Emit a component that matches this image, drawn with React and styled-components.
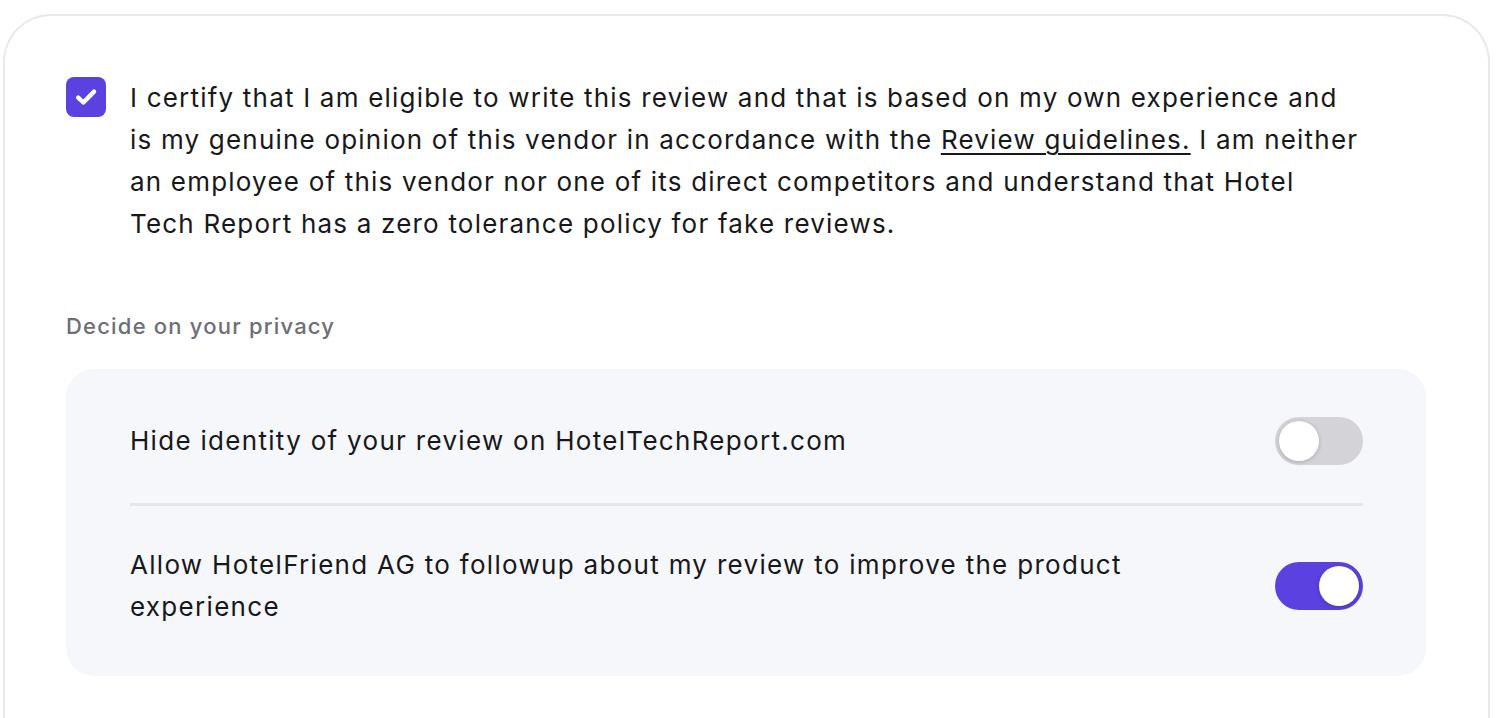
import React, { useState } from 'react';
import styled, { createGlobalStyle } from 'styled-components';

const Global = createGlobalStyle`
  html, body { margin: 0; padding: 0; background: #fff; }
  body { font-family: Inter, "Noto Sans", sans-serif; color: #18181b; overflow: hidden; }
`;

const Card = styled.div`
  margin: 14px 16px 0 3px;
  height: 760px;
  border: 2px solid #e8e8ed;
  border-bottom: none;
  border-radius: 48px 48px 0 0;
  padding: 61px 62px 0 61px;
  box-sizing: border-box;
`;

const CertifyRow = styled.label`
  display: flex;
  align-items: flex-start;
  gap: 24px;
  cursor: pointer;
`;

const Check = styled.span`
  flex: none;
  width: 40px;
  height: 40px;
  border-radius: 8px;
  background: ${p => (p.$checked ? '#5b41e0' : '#fff')};
  border: ${p => (p.$checked ? 'none' : '2px solid #d4d4d8')};
  box-sizing: border-box;
  display: flex;
  align-items: center;
  justify-content: center;
`;

const CertifyText = styled.p`
  margin: 0;
  max-width: 1233px;
  font-size: 26px;
  line-height: 42px;
  color: #18181b;
  letter-spacing: 1.2px;

  a {
    color: inherit;
    text-decoration: underline;
    text-underline-offset: 4px;
    text-decoration-thickness: 2px;
  }
`;

const SectionLabel = styled.div`
  margin-top: 67px;
  font-size: 22px;
  font-weight: 500;
  color: #6e6d78;
  line-height: 28px;
  letter-spacing: 1.2px;
`;

const PrivacyBox = styled.div`
  margin-top: 29px;
  background: #f6f7fb;
  border-radius: 28px;
  padding: 10px 63px 10px 64px;
`;

const Row = styled.div`
  display: flex;
  align-items: center;
  justify-content: space-between;
  gap: 40px;
  padding: 38px 0;
  & + & { border-top: 3px solid #e6e6eb; }
`;

const RowText = styled.div`
  font-size: 26px;
  line-height: 42px;
  color: #18181b;
  letter-spacing: 1.3px;
  max-width: 1000px;
`;

const Track = styled.button`
  flex: none;
  position: relative;
  width: 88px;
  height: 48px;
  border: none;
  border-radius: 24px;
  padding: 0;
  cursor: pointer;
  background: ${p => (p.$on ? '#5b41e0' : '#d4d4d8')};
`;

const Knob = styled.span`
  position: absolute;
  top: 4px;
  left: ${p => (p.$on ? '44px' : '4px')};
  width: 40px;
  height: 40px;
  border-radius: 50%;
  background: #fff;
  box-shadow: 0 1px 4px rgba(0, 0, 0, 0.2);
`;

const Toggle = ({ on, onClick }) => (
  <Track $on={on} onClick={onClick}>
    <Knob $on={on} />
  </Track>
);

export default function App() {
  const [checked, setChecked] = useState(true);
  const [hide, setHide] = useState(false);
  const [follow, setFollow] = useState(true);

  return (
    <>
      <Global />
      <Card>
        <CertifyRow onClick={() => setChecked(!checked)}>
          <Check $checked={checked}>
            {checked && (
              <svg width="40" height="40" viewBox="0 0 40 40" fill="none">
                <path d="M12.2 20.6l5.2 4.9L28 14.6" stroke="#fff" strokeWidth="4.4" strokeLinecap="round" strokeLinejoin="round" />
              </svg>
            )}
          </Check>
          <CertifyText>
            I certify that I am eligible to write this review and that is based on my own experience and is my genuine
            opinion of this vendor in accordance with the <a href="#">Review guidelines.</a> I am neither an employee of
            this vendor nor one of its direct competitors and understand that Hotel Tech Report has a zero tolerance
            policy for fake reviews.
          </CertifyText>
        </CertifyRow>

        <SectionLabel>Decide on your privacy</SectionLabel>

        <PrivacyBox>
          <Row>
            <RowText>Hide identity of your review on HotelTechReport.com</RowText>
            <Toggle on={hide} onClick={() => setHide(!hide)} />
          </Row>
          <Row>
            <RowText>Allow HotelFriend AG to followup about my review to improve the product experience</RowText>
            <Toggle on={follow} onClick={() => setFollow(!follow)} />
          </Row>
        </PrivacyBox>
      </Card>
    </>
  );
}
